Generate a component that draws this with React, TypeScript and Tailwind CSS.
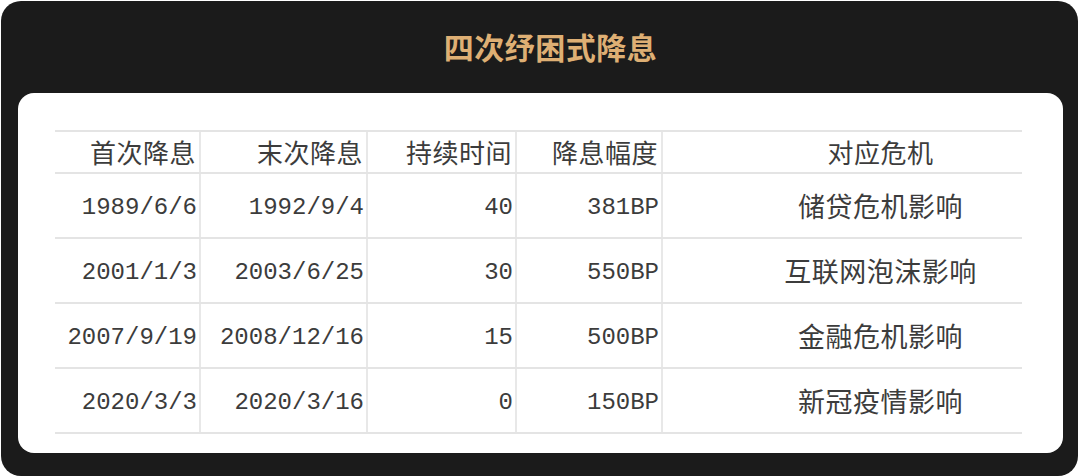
const rows = [
  ["1989/6/6", "1992/9/4", "40", "381BP", "储贷危机影响"],
  ["2001/1/3", "2003/6/25", "30", "550BP", "互联网泡沫影响"],
  ["2007/9/19", "2008/12/16", "15", "500BP", "金融危机影响"],
  ["2020/3/3", "2020/3/16", "0", "150BP", "新冠疫情影响"],
];

const heads = ["首次降息", "末次降息", "持续时间", "降息幅度"];

const cjk = { fontFamily: '"Noto Sans CJK SC", "Noto Sans", sans-serif' };
const mono = { fontFamily: '"Liberation Mono", "Noto Sans CJK SC", monospace' };

export default function App() {
  return (
    <div className="w-[1080px] h-[476px] bg-white p-[1px] pr-[2px] pb-0">
      <div className="h-full w-full bg-[#1b1b1b] rounded-[20px] px-[17px] pr-[15px] pb-[23px] flex flex-col">
        {/* title */}
        <div className="h-[92px] flex items-center justify-center pb-[2px] pl-[20px]">
          <h1
            className="text-[30px] font-bold tracking-[0.5px] text-[#deaf74]"
            style={cjk}
          >
            四次纾困式降息
          </h1>
        </div>

        {/* card */}
        <div className="flex-1 bg-white rounded-[16px] pl-[37px] pt-[37px] overflow-hidden">
          <div className="w-[967px] border-t-2 border-[#e4e4e4] text-[#3c3c3c]">
            {/* header */}
            <div className="grid grid-cols-[146px_167px_149px_146px_359px] h-[42px] border-b-2 border-[#e4e4e4]">
              {heads.map((h) => (
                <div
                  key={h}
                  className="border-r-2 border-[#e8e8e8] flex items-center justify-end pr-[3px] text-[26px] leading-none tracking-[0.5px]"
                  style={cjk}
                >
                  {h}
                </div>
              ))}
              <div
                className="flex items-center justify-center pl-[76px] text-[26px] leading-none tracking-[0.5px]"
                style={cjk}
              >
                对应危机
              </div>
            </div>

            {/* data rows */}
            {rows.map((r, i) => (
              <div
                key={i}
                className="grid grid-cols-[146px_167px_149px_146px_359px] h-[65px] border-b-2 border-[#e4e4e4]"
              >
                {r.slice(0, 4).map((c, j) => (
                  <div
                    key={j}
                    className="border-r-2 border-[#e8e8e8] flex items-center justify-end pr-[2px] pt-[4px] text-[24px] leading-none"
                    style={mono}
                  >
                    {c}
                  </div>
                ))}
                <div
                  className="flex items-center justify-center pl-[76px] text-[27px] leading-none tracking-[0.5px]"
                  style={cjk}
                >
                  {r[4]}
                </div>
              </div>
            ))}
          </div>
        </div>
      </div>
    </div>
  );
}
